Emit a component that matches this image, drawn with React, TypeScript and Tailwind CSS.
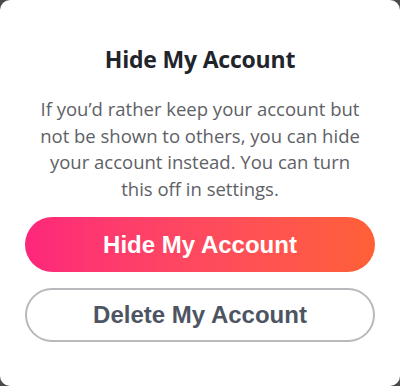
export default function App() {
  return (
    <div className="w-[400px] h-[386px] bg-[#4a4a4a] overflow-hidden">
      <div className="w-full h-full bg-white rounded-[10px] flex flex-col items-center px-[25px]">
        <h2 className="mt-[44px] text-[23px] font-bold text-[#21242b] font-['Open_Sans',sans-serif] leading-[30px] tracking-[-0.2px]">
          Hide My Account
        </h2>
        <p className="mt-[22px] w-[330px] text-center text-[18.5px] leading-[26.5px] text-[#5e6166] font-['Open_Sans',sans-serif]">
          If you’d rather keep your account but not be shown to others, you can hide your account instead. You can turn this off in settings.
        </p>
        <button className="mt-[15px] w-full h-[55px] rounded-full bg-gradient-to-r from-[#fd267a] to-[#ff6036] text-white text-[24px] font-bold font-['Liberation_Sans',Arial,sans-serif]">
          Hide My Account
        </button>
        <button className="mt-[16px] w-full h-[54px] rounded-full border-2 border-[#b9b9bd] bg-white text-[#4d5562] text-[24px] font-bold font-['Liberation_Sans',Arial,sans-serif]">
          Delete My Account
        </button>
      </div>
    </div>
  );
}
